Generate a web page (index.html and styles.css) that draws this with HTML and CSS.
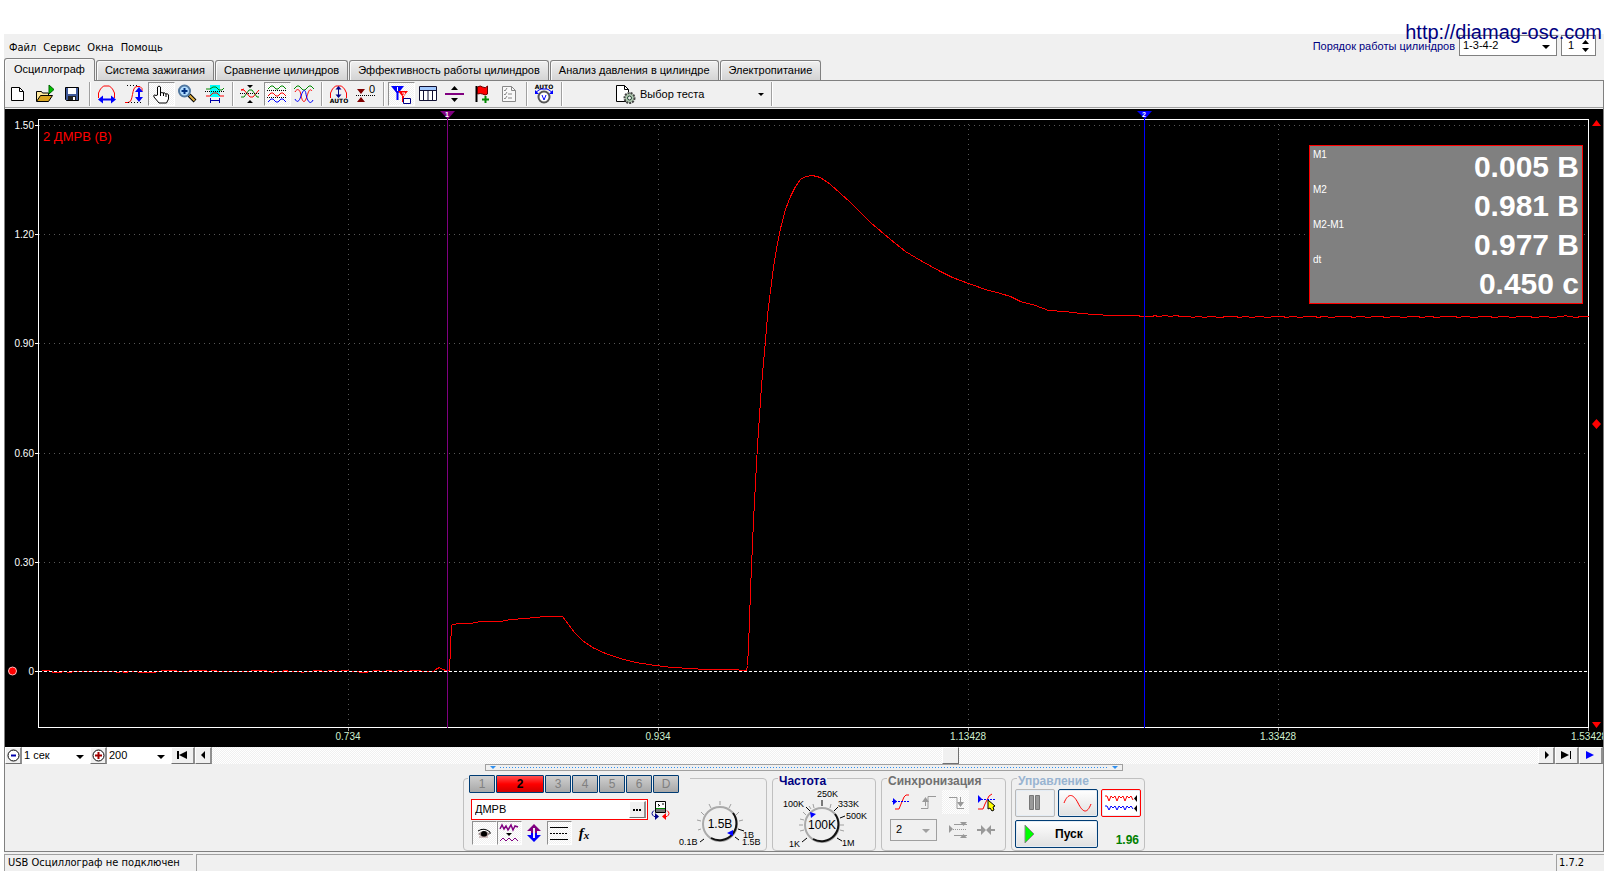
FILE: index.html
```html
<!DOCTYPE html>
<html lang="ru">
<head>
<meta charset="utf-8">
<title>Осциллограф</title>
<link rel="stylesheet" href="styles.css">
</head>
<body>
<a class="site-link" href="#">http://diamag-osc.com</a>
<div class="app">
  <header class="header">
    <nav class="menu">
      <button>Файл</button><button>Сервис</button><button>Окна</button><button>Помощь</button>
    </nav>
    <div class="order">
      <label for="order">Порядок работы цилиндров</label>
      <span class="drop drop-order"><select id="order"><option>1-3-4-2</option></select></span>
      <span class="spin"><input id="cyl" type="text" value="1" aria-label="Цилиндр"><svg width="9" height="14" viewBox="0 0 9 14"><path d="M1 5h7L4.500 1zM1 9h7l-3.500 4z"/></svg></span>
    </div>
  </header>

  <div class="tabs" role="tablist">
    <button class="tab tab-on" role="tab">Осциллограф</button>
    <button class="tab" role="tab">Система зажигания</button>
    <button class="tab" role="tab">Сравнение цилиндров</button>
    <button class="tab" role="tab">Эффективность работы цилиндров</button>
    <button class="tab" role="tab">Анализ давления в цилиндре</button>
    <button class="tab" role="tab">Электропитание</button>
  </div>

  <main class="page">
    <div class="toolbar" role="toolbar">
      <button class="tool" aria-label="Новый"><svg viewBox="0 0 20 20"><path d="M3.500 3.500h8l4 4v9h-12z" fill="#fff" stroke="#000"/><path d="M11.500 3.500v4h4" fill="none" stroke="#000"/></svg></button>
      <button class="tool" aria-label="Открыть"><svg viewBox="0 0 20 20"><path d="M1.500 17V7.500h5l1 1.500h6v3" fill="#ffe9a0" stroke="#000"/><path d="M1.500 17.500l4-6h12l-4 6z" fill="#d9a520" stroke="#000"/><path d="M14 1v9l5-4.500z" fill="#00c000" stroke="#006000"/></svg></button>
      <button class="tool" aria-label="Сохранить"><svg viewBox="0 0 20 20"><path d="M3.500 3.500h13v13h-12l-1-1z" fill="#405a9a" stroke="#000"/><path d="M6 4h8v6H6z" fill="#fff"/><path d="M6 12h8v4H6z" fill="#222"/><path d="M11 13h2v3h-2z" fill="#fff"/></svg></button>
      <i class="sep"></i>
      <button class="tool" aria-label="Растянуть по горизонтали"><svg viewBox="0 0 20 20"><path d="M1.500 14V9l2-4 3-3h6l3 3 2 4v5" fill="none" stroke="#f00"/><path d="M3 15.500h14" stroke="#00f" stroke-width="2"/><path d="M1 15.500l5-4v8zM19 15.500l-5-4v8z" fill="#00f"/></svg></button>
      <button class="tool" aria-label="Растянуть по вертикали"><svg viewBox="0 0 20 20"><path d="M1 18.500h3c6 0 3-16 9-16h3l2 2v3" fill="none" stroke="#f00"/><path d="M3 1.500h12M4 18.500h15" stroke="#000" stroke-dasharray="1 2"/><path d="M15 6v10" stroke="#00f" stroke-width="2"/><path d="M15 3l4 5h-8zM15 18l4-5h-8z" fill="#00f"/></svg></button>
      <button class="tool pressed" aria-label="Рука"><svg viewBox="0 0 20 20"><path d="M6.500 11V3q1.500-2 3 0v6q1.500-1 2.500 0 2-1 2.500 1 2.500-1 3 1v4l-2 4H8l-5-6q-1-3 2-1.500z" fill="#fff" stroke="#000"/><path d="M9.500 9v3M12.500 9v3M15 10v3" stroke="#000"/></svg></button>
      <button class="tool" aria-label="Лупа"><svg viewBox="0 0 20 20"><path d="M11 11l6 6" stroke="#000" stroke-width="4"/><path d="M11.500 11.500l5 5" stroke="#e0b040" stroke-width="2"/><circle cx="6.500" cy="7" r="5.500" fill="#b0dcff" stroke="#5078a0" stroke-width="2"/><path d="M6.500 4v6M3.500 7h6" stroke="#003080" stroke-width="2"/></svg></button>
      <button class="tool" aria-label="Область"><svg viewBox="0 0 20 20"><path d="M5 1h10v12H5z" fill="#0ff"/><path d="M1 5h4l3-2h3l3 3h3l2-2" fill="none" stroke="#080"/><path d="M1 12h4l3-3h4l3 3h4" fill="none" stroke="#f00"/><path d="M0 7.500h19" stroke="#000" stroke-dasharray="1 1"/><path d="M5.500 14v5M14.500 14v5M6 16.500h8" stroke="#00a" fill="none"/></svg></button>
      <i class="sep"></i>
      <button class="tool" aria-label="Совместить"><svg viewBox="0 0 20 20"><path d="M1 6h3l6 7h3l6-7M1 6l3-1" fill="none" stroke="#f00"/><path d="M1 13h3l5-7h3l5 7h2" fill="none" stroke="#080"/><path d="M0 9.500h20" stroke="#000" stroke-dasharray="1 1"/><path d="M7 1h6l-3 3zM7 19h6l-3-3z"/></svg></button>
      <button class="tool pressed" aria-label="Разделить"><svg viewBox="0 0 20 20"><path d="M1 5l3-3h2l3 3h2l3-3h2l3 3" fill="none" stroke="#080"/><path d="M1 12l3-3h2l3 3h2l3-3h2l3 3" fill="none" stroke="#f00"/><path d="M1 18l3-3h2l3 3h2l3-3h2l3 3" fill="none" stroke="#00f"/><path d="M0 6.500h20M0 13.500h20" stroke="#000" stroke-dasharray="1 1"/></svg></button>
      <button class="tool" aria-label="Наложить"><svg viewBox="0 0 20 20"><path d="M0 5l3-3h2l4 4h2l4-4h2l3 3" fill="none" stroke="#080"/><path d="M1 8c2-4 5-3 6 3s3 9 5 4 3-12 6-8" fill="none" stroke="#f00"/><path d="M1 15c2 4 4 3 6-3s4-8 5-2 4 12 7 6" fill="none" stroke="#00f"/></svg></button>
      <i class="sep"></i>
      <button class="tool" aria-label="Авто"><svg viewBox="0 0 20 20"><path d="M1.500 14V9l2-4 3-3h6l3 3 2 4v5" fill="none" stroke="#f00"/><path d="M9.500 4v9" stroke="#008" /><path d="M9.500 2l3 3.500h-6zM9.500 14l3-3.500h-6z" fill="#008"/><text class="icon-text" x="10" y="19">AUTO</text></svg></button>
      <button class="tool" aria-label="Ноль"><svg viewBox="0 0 20 20"><path d="M1 5h8l-4 5zM1 18h8l-4-5z" fill="#800000"/><path d="M0 11.500h20" stroke="#000" stroke-dasharray="1 1"/><text x="13" y="9" font-size="11">0</text></svg></button>
      <i class="sep"></i>
      <button class="tool pressed" aria-label="Маркеры"><svg viewBox="0 0 20 20"><path d="M0 2h13L7.500 9v7h-2V9z" fill="#00f"/><path d="M7 7h10l-4 5v6h-2v-6z" fill="#f00"/><path d="M6.500 3v4M11 9h3l-2 3" stroke="#fff" fill="none"/><path d="M12.500 14.500h7v5h-7z" fill="#fff" stroke="#008"/></svg></button>
      <button class="tool" aria-label="Таблица"><svg viewBox="0 0 20 20"><path d="M1.500 2.500h17v14h-17z" fill="#fff" stroke="#113"/><path d="M2 3h16v3H2z" fill="#a0c8ff"/><path d="M2 6.500h16M5.500 6v10M10 6v10M14.500 6v10" stroke="#113"/></svg></button>
      <button class="tool" aria-label="Линия"><svg viewBox="0 0 20 20"><path d="M0 9h19v2H0z" fill="#800080"/><path d="M6 6h7L9.500 2zM6 14h7l-3.500 4z"/></svg></button>
      <button class="tool" aria-label="Флаг"><svg viewBox="0 0 20 20"><path d="M4.500 2v16" stroke="#000" stroke-width="2"/><path d="M5.500 3q3-2 5 0 3 2 5-1v8q-2 2-5 0-2-1-5 0z" fill="#f00" stroke="#600"/><path d="M13.500 12v7M10 15.500h7" stroke="#080" stroke-width="2"/></svg></button>
      <button class="tool" aria-label="Список"><svg viewBox="0 0 20 20"><path d="M3.500 2.500h9l4 4v11h-13z" fill="#f8f8f8" stroke="#888"/><path d="M12.500 2.500v4h4M5 6l1 1 2-3M5 10l1 1 2-3M5 14l1 1 2-3M9 10h4M9 14h4" fill="none" stroke="#888"/></svg></button>
      <i class="sep"></i>
      <button class="tool" aria-label="Автонастройка"><svg viewBox="0 0 20 20"><text class="icon-text" x="10" y="5">AUTO</text><circle cx="10" cy="13" r="5.500" fill="#fff" stroke="#555" stroke-width="2"/><path d="M8 11l2 5 2-5M1 9l4-3 2-1h6l2 1 4 3" fill="none" stroke="#00f"/><path d="M1 6v4h4zM19 6v4h-4z" fill="#00f"/></svg></button>
      <i class="sep"></i>
      <button class="test"><svg width="20" height="20" viewBox="0 0 20 20"><path d="M10 17.500H.5v-16h8l4 4V8" fill="#fff" stroke="#000"/><path d="M8.500 1.500v4h4" fill="none" stroke="#000"/><circle cx="13.500" cy="14" r="5" fill="#b0c8b0" stroke="#444" stroke-width="2" stroke-dasharray="2 1"/><circle cx="13.500" cy="14" r="2" fill="#eee" stroke="#243"/></svg><span>Выбор теста</span></button>
      <i class="sep"></i>
    </div>

    <section class="scope">
      <svg class="plot" viewBox="5 109 1598 638">
        <path class="grid" d="M39 125.500H1588M39 234.500H1588M39 343.500H1588M39 453.500H1588M39 562.500H1588M348.500 124V727M658.500 124V727M968.500 124V727M1278.500 124V727"/>
        <path class="frame" d="M38.500 119.500H1588.500V727.500H38.500zM35 125.500h3M35 234.500h3M35 343.500h3M35 453.500h3M35 562.500h3M35 671.500h3"/>
        <path class="tick" d="M348.500 728v3M658.500 728v3M968.500 728v3M1278.500 728v3M1588.500 728v3"/>
        <polyline class="trace" transform="translate(.5 .5)" points="39,671 44,670 49,670 50,671 54,672 60,672 62,671 70,672 72,671 115,671 116,672 119,672 120,671 126,672 128,671 147,672 155,672 156,671 166,670 175,670 178,671 200,670 206,670 207,671 215,670 217,671 250,671 252,670 265,670 272,672 274,671 282,671 284,670 290,671 300,671 302,672 305,671 320,670 323,671 333,670 335,671 347,670 350,671 366,672 368,671 378,670 381,671 390,670 393,671 402,670 405,671 415,670 419,670 421,671 433,671 435,669 439,667 442,669 446,670 449,670 450,647 451,625 452,624 460,623 470,623 480,621 500,621 510,619 525,618 535,617 545,616 562,616 568,624 574,632 582,640 592,647 605,653 620,658 635,662 655,665 672,667 690,668 705,669 730,669 746,670 747,665 748,646 749,620 750,590 753,520 757,445 761,385 765,340 767,315 770,290 773,267 776,248 780,228 785,209 790,196 795,186 800,179 805,176 812,175 820,177 830,184 850,202 870,222 890,239 905,251 920,260 940,271 952,277 968,283 985,289 1000,293 1010,296 1020,301 1035,305 1048,310 1065,311 1080,313 1110,315 1138,315 1140,316 1152,316 1154,315 1158,316 1166,315 1169,316 1176,315 1180,316 1190,316 1191,317 1198,316 1204,317 1210,316 1220,317 1226,316 1236,316 1238,317 1245,316 1252,317 1258,316 1268,317 1273,316 1283,316 1285,317 1292,316 1300,317 1306,316 1315,316 1317,317 1323,316 1331,317 1338,316 1350,316 1352,317 1360,316 1368,317 1374,316 1382,316 1384,317 1395,316 1403,317 1410,316 1418,316 1420,317 1430,316 1436,317 1444,316 1455,316 1457,317 1465,316 1474,317 1482,316 1490,316 1492,317 1504,316 1512,317 1520,316 1530,316 1532,317 1545,316 1552,317 1562,316 1565,315 1568,316 1576,317 1580,316 1588,316"/>
        <path class="zero" d="M39 671.500H1588"/>
        <path fill="#800080" d="M447 117h1v611h-1zM440 111h15l-7 8z"/>
        <path fill="#00f" d="M1144 117h1v611h-1zM1137 111h15l-7 8z"/>
        <text class="cursor-num" x="447" y="117">1</text>
        <text class="cursor-num" x="1144" y="117">2</text>
        <path fill="#f00" d="M1592 126h9l-4.500-6zM1592 722h9l-4.500 6zM1592 424l4.500-5 4.500 5-4.500 5z"/>
        <circle cx="12.500" cy="671" r="4" fill="#f00" stroke="#fbb"/>
        <g class="y-axis"><text x="34" y="129">1.50</text><text x="34" y="238">1.20</text><text x="34" y="347">0.90</text><text x="34" y="457">0.60</text><text x="34" y="566">0.30</text><text x="34" y="675">0</text></g>
        <g class="x-axis"><text x="348" y="740">0.734</text><text x="658" y="740">0.934</text><text x="968" y="740">1.13428</text><text x="1278" y="740">1.33428</text><text x="1589" y="740">1.53428</text></g>
        <text class="plot-title" x="43" y="141">2 ДМРВ (В)</text>
      </svg>
      <div class="readout">
        <div class="readout-names"><span>M1</span><span>M2</span><span>M2-M1</span><span>dt</span></div>
        <div class="readout-values"><span>0.005 В</span><span>0.981 В</span><span>0.977 В</span><span>0.450 с</span></div>
      </div>
    </section>

    <div class="timeline">
      <button class="raised" aria-label="Уменьшить"><svg width="13" height="13" viewBox="0 0 13 13"><circle cx="6.500" cy="6.500" r="5.500" fill="#fff" stroke="#000"/><path d="M4 6.500h5" stroke="#00a" stroke-width="2"/></svg></button>
      <span class="drop drop-time"><select aria-label="Время"><option>1 сек</option></select></span>
      <button class="raised" aria-label="Увеличить"><svg width="13" height="13" viewBox="0 0 13 13"><circle cx="6.500" cy="6.500" r="5.500" fill="#fff" stroke="#000"/><path d="M3 6.500h7M6.500 3v7" stroke="#a00000" stroke-width="2"/></svg></button>
      <span class="drop drop-zoom"><select aria-label="Масштаб"><option>200</option></select></span>
      <button class="raised wide" aria-label="В начало"><svg width="11" height="8" viewBox="0 0 11 8"><path d="M0 0h2v8H0zM2 4l8-4v8z"/></svg></button>
      <button class="raised" aria-label="Назад"><svg width="5" height="8" viewBox="0 0 5 8"><path d="M0 4l4-4v8z"/></svg></button>
      <input class="scroll" type="range" min="0" max="1000" value="558" aria-label="Прокрутка">
      <button class="raised" aria-label="Вперёд"><svg width="5" height="8" viewBox="0 0 5 8"><path d="M5 4L1 0v8z"/></svg></button>
      <button class="raised wide" aria-label="В конец"><svg width="11" height="8" viewBox="0 0 11 8"><path d="M9 0h1v8H9zM8 4L0 0v8z"/></svg></button>
      <button class="raised wide" aria-label="Воспроизвести"><svg width="9" height="8" viewBox="0 0 9 8"><path fill="#00f" d="M8 4L0 0v8z"/></svg></button>
    </div>

    <div class="splitter"><i></i><b></b><i></i></div>

    <div class="panels">
      <section class="panel panel-channel">
        <div class="channels">
          <button class="ch">1</button><button class="ch ch-on">2</button><button class="ch">3</button><button class="ch">4</button><button class="ch">5</button><button class="ch">6</button><button class="ch">D</button>
        </div>
        <div class="channel-body">
          <div class="channel-left">
            <div class="sensor-row">
              <span class="sensor"><input type="text" value="ДМРВ" aria-label="Датчик"><button class="raised" aria-label="Выбрать датчик"><svg width="9" height="2" viewBox="0 0 9 2"><path d="M0 0h2v2H0zM3 0h2v2H3zM6 0h2v2H6z"/></svg></button></span>
              <button class="plain" aria-label="Инвертировать"><svg width="20" height="20" viewBox="0 0 20 20"><path d="M4.500 1.500h10v11h-10z" fill="#fff" stroke="#000"/><path d="M5 9h9v3H5z" fill="#777"/><path d="M5 8.500h9" stroke="#080"/><path d="M7 4l2 2M11 4h2M7 6h1" stroke="#000"/><path d="M3 10.500q-4 3 0 6h2" fill="none" stroke="#008"/><path d="M4 13v7l4-3.500z" fill="#008"/><path d="M16 10.500q4 3 0 6h-2" fill="none" stroke="#f00"/><path d="M15 13v7l-4-3.500z" fill="#f00"/></svg></button>
            </div>
            <div class="channel-tools">
              <button class="tool pressed" aria-label="Видимость"><svg viewBox="0 0 20 20"><path d="M4 8q6-4 12 1v2" fill="none" stroke="#000"/><path d="M4 11q6-6 12 0-6 5-12 0z" fill="#988"/><circle cx="10" cy="11" r="3"/><path d="M5 14h9" stroke="#a88"/></svg></button>
              <button class="tool pressed" aria-label="Фильтр"><svg viewBox="0 0 20 20"><path d="M1 6l2-4 2 4 2-3 2 4 3-5 2 5 2-4 3 1" fill="none" stroke="#800080" stroke-width="1.500"/><path d="M1 18l3-3 3 3 3-3 3 3 3-3 3 3" fill="none" stroke="#800080"/><path d="M7 10h6l-3 3z"/></svg></button>
              <button class="tool" aria-label="Смещение"><svg viewBox="0 0 20 20"><path d="M10 1l7 7h-4v3H7V8H3z" fill="#800080"/><path d="M10 19l7-7h-4v-2H7v2H3z" fill="#00f"/><path d="M10 5v10" stroke="#f0f0f0" stroke-width="2"/></svg></button>
              <button class="tool pressed" aria-label="Линии"><svg viewBox="0 0 20 20"><path d="M1 4.500h18M1 16.500h18" stroke="#000"/><path d="M1 10.500h18" stroke="#000" stroke-dasharray="2 1"/></svg></button>
              <button class="tool fx">f<small>x</small></button>
            </div>
          </div>
          <svg class="knob" width="93" height="56" viewBox="671 793 93 56">
            <path class="knob-ticks" d="M718 801v4M707 804l2 4M729 804l-2 4M699 812l3 3M737 812l-3 3M695 820l4 1M741 820l-4 1M696 830l3-1"/>
            <path class="knob-marks" d="M698 842l4-3M736 829l6 2M733 837l4 3"/>
            <circle cx="718" cy="824" r="17" fill="#f0f0f0" stroke="#aaa" stroke-width="2"/>
            <path d="M731 813a17 17 0 0 1-22 25" fill="none" stroke="#111" stroke-width="2"/>
            <path d="M725 833l6-3v6z" fill="#00f"/>
            <text class="knob-value" x="718" y="828">1.5В</text>
            <text x="677" y="845">0.1В</text><text x="741" y="838">1В</text><text x="740" y="845">1.5В</text>
          </svg>
        </div>
      </section>

      <section class="panel panel-rate">
        <h2 class="title navy">Частота</h2>
        <svg class="knob" width="102" height="62" viewBox="773 786 102 62">
          <path class="knob-ticks" d="M813 803l1 4M831 803l-1 4M800 818l4 1M799 824h4M800 830l4-1M844 824h-4M844 830l-4-1M803 811l3 3M809 805l2 3"/>
          <path class="knob-marks" d="M806 806l4 4M822 799v6M838 806l-4 4M845 815l-5 2M802 841l5-4M837 837l5 3"/>
          <circle cx="822" cy="824" r="17" fill="#f0f0f0" stroke="#aaa" stroke-width="2"/>
          <path d="M835 813a17 17 0 0 1-22 25" fill="none" stroke="#111" stroke-width="2"/>
          <path d="M810 811l6 2-5 4z" fill="#00f"/>
          <text class="knob-value" x="822" y="828">100K</text>
          <text x="783" y="806">100K</text><text x="817" y="796">250K</text><text x="838" y="806">333K</text><text x="846" y="818">500K</text><text x="789" y="846">1K</text><text x="842" y="845">1M</text>
        </svg>
      </section>

      <section class="panel panel-sync">
        <h2 class="title gray">Синхронизация</h2>
        <div class="sync-row">
          <button class="tool" aria-label="Синхронизация"><svg viewBox="0 0 20 20"><path d="M4 17h4l2-5 3-7 2-2h3" fill="none" stroke="#f00"/><path d="M1 9.500h17" stroke="#00f" stroke-dasharray="2 1"/><path d="M2 6v7l4-3.500z" fill="#00f"/></svg></button>
          <button class="tool" aria-label="По фронту"><svg viewBox="0 0 20 20"><path d="M3 16.500h7v-12h8M7.500 14V8" fill="none" stroke="#999"/><path d="M4 10h7L7.500 5z" fill="#999"/></svg></button>
          <button class="tool pressed flat" aria-label="По спаду"><svg viewBox="0 0 20 20"><path d="M4 5.500h8v11h7M15.500 5v6" fill="none" stroke="#999"/><path d="M12 10h7l-3.500 5z" fill="#999"/></svg></button>
          <button class="tool last" aria-label="Захват"><svg viewBox="0 0 20 20"><path d="M1 17h5l2-5 4-8 3-2" fill="none" stroke="#f00"/><path d="M1 7.500h18" stroke="#00f" stroke-dasharray="2 1"/><path d="M1 3v8l4-4z" fill="#00f"/><path d="M11 8v9l2-1 2 3 2-1-1-3 2-1z" fill="#ff0" stroke="#000"/></svg></button>
        </div>
        <div class="sync-row sync-lower">
          <span class="drop drop-sync"><select aria-label="Канал синхронизации" disabled><option>2</option></select></span>
          <button class="tool" aria-label="Уровень"><svg viewBox="0 0 20 20"><path d="M6 4.500h13M6 15.500h13" stroke="#999"/><path d="M5 9.500h14" stroke="#999" stroke-dasharray="1 1"/><path d="M1 5v8l4-4zM12 2h7l-3.500 4zM12 18h7l-3.500-4z" fill="#999"/></svg></button>
          <button class="tool" aria-label="Сжать"><svg viewBox="0 0 20 20"><path d="M1 10h5M14 10h5" stroke="#999" stroke-width="2"/><path d="M5 5v10l5-5zM15 5v10l-5-5z" fill="#999"/></svg></button>
        </div>
      </section>

      <section class="panel panel-run">
        <h2 class="title pale">Управление</h2>
        <div class="run-grid">
          <button class="run off" aria-label="Пауза"><svg width="12" height="16" viewBox="0 0 12 16"><path d="M.5.5h4v14h-4zM6.500.5h4v14h-4z" fill="#999" stroke="#777"/></svg></button>
          <button class="run" aria-label="Один канал"><svg width="32" height="22" viewBox="0 0 32 22"><path d="M2 11C6 1 11 1 16 11s9 11 13 1" fill="none" stroke="#f00"/></svg></button>
          <button class="run red" aria-label="Все каналы"><svg width="36" height="22" viewBox="0 0 36 22"><path d="M2 4h2l2 5 2-5 2 2 2-2 2 5 2-5 2 2 2-2 2 5 2-5 2 2 2-2 2 4" fill="none" stroke="#f00"/><path d="M2 14h2l2 4 2-4 2 2 2-2 2 4 2-4 2 2 2-2 2 4 2-4 2 2 2-2 2 3" fill="none" stroke="#00f"/><path d="M34 3v7l-3-3.500zM34 13v7l-3-3.500z"/></svg></button>
          <button class="run start"><svg width="12" height="20" viewBox="0 0 12 20"><path d="M1 1l9 9-9 9z" fill="#0f0" stroke="#888"/></svg><span>Пуск</span></button>
          <output class="ratio">1.96</output>
        </div>
      </section>
    </div>
  </main>

  <footer class="status">
    <span class="status-usb">USB Осциллограф не подключен</span>
    <span class="status-info"></span>
    <span class="status-version">1.7.2</span>
  </footer>
</div>
</body>
</html>
```
FILE: styles.css
```css
* { box-sizing: border-box; }

body {
  margin: 0;
  padding: 34px 12px 4px 4px;
  background: #fff;
  color: #000;
  font: 11px/14px "Liberation Sans", sans-serif;
}

button, input, select { font: inherit; color: inherit; margin: 0; padding: 0; border: 0; background: none; }
svg { display: block; flex: none; }

.app { background: #f0f0f0; }

.site-link {
  position: absolute;
  top: 20px;
  right: 14px;
  z-index: 2;
  color: #000080;
  font-size: 20px;
  line-height: 24px;
  text-decoration: none;
}

.header { display: flex; justify-content: space-between; height: 24px; }
.menu { display: flex; gap: 7px; padding: 7px 0 0 5px; align-items: flex-start; font-family: "DejaVu Sans Condensed", "DejaVu Sans", sans-serif; }
.order { display: flex; gap: 4px; align-items: flex-start; padding: 1px 8px 0 0; color: #000080; }
.order label { padding-top: 4px; }

.drop { position: relative; display: block; background: #fff; color: #000; }
.drop select { appearance: none; display: block; width: 100%; height: 100%; padding: 0 0 2px 3px; border-radius: 0; opacity: 1; }
.drop::after {
  content: "";
  position: absolute;
  top: 50%;
  right: 6px;
  margin-top: -1px;
  border: 4px solid transparent;
  border-top-color: #000;
  border-bottom: 0;
  pointer-events: none;
}
.drop-order { width: 98px; height: 21px; border: 1px solid #808080; }
.drop-time { width: 68px; }
.drop-time select, .drop-zoom select { padding-left: 2px; }
.drop-zoom { width: 64px; }
.drop-sync { width: 47px; height: 22px; border: 1px solid #a0a0a0; background: #f0f0f0; }
.drop-sync select { padding-left: 5px; }
.drop-sync::after { border-top-color: #a0a0a0; }

.spin { display: flex; align-items: center; width: 35px; height: 21px; border: 1px solid #808080; background: #fff; color: #000; }
.spin input { width: 19px; height: 17px; padding: 0 0 2px 6px; }

.tabs { display: flex; align-items: flex-end; gap: 1px; height: 23px; border-bottom: 1px solid #808080; }
.tab {
  height: 20px;
  padding: 0 8px 2px;
  border: 1px solid #808080;
  border-bottom: 0;
  border-radius: 3px 3px 0 0;
  background: linear-gradient(#f0f0f0, #d4d4d4);
  box-shadow: inset 1px 1px #fafafa;
}
.tab-on { height: 23px; margin: 0 0 -1px; padding: 0 9px 2px; background: #f0f0f0; }

.page { border: 1px solid #808080; border-top: 0; }

.toolbar { display: flex; align-items: center; height: 27px; padding-bottom: 1px; border-bottom: 1px solid #a0a0a0; margin-bottom: 1px; }
.tool { display: flex; align-items: center; justify-content: center; width: 27px; height: 24px; padding-right: 1px; }
.tool svg { width: 20px; height: 20px; }
.pressed {
  border: 1px solid #fff;
  border-top-color: #909090;
  border-left-color: #909090;
  background: repeating-conic-gradient(#fff 0 25%, #f0f0f0 0 50%) 0 0 / 2px 2px;
}
.flat { border-color: transparent; }
.sep { width: 8px; height: 24px; background: linear-gradient(90deg, transparent 3px, #a0a0a0 3px 4px, #fff 4px 5px, transparent 5px); }
.icon-text { font: bold 6px "DejaVu Sans", sans-serif; text-anchor: middle; }
.test { position: relative; display: flex; align-items: center; gap: 4px; width: 202px; height: 24px; padding-left: 50px; }
.test::after { content: ""; position: absolute; right: 4px; top: 11px; border: 3px solid transparent; border-top-color: #000; border-bottom: 0; }

.scope { position: relative; background: #000; }
.plot { width: 100%; height: auto; font-size: 10px; }
.grid { fill: none; stroke: #585858; stroke-dasharray: 1 4; shape-rendering: crispEdges; }
.frame { fill: none; stroke: #fff; shape-rendering: crispEdges; }
.tick { stroke: #a0a0a0; shape-rendering: crispEdges; }
.trace { fill: none; stroke: #f00; shape-rendering: crispEdges; }
.zero { stroke: #fff; stroke-dasharray: 3 2; shape-rendering: crispEdges; }
.cursor-num { fill: #fff; font-size: 7px; font-weight: bold; text-anchor: middle; }
.y-axis { fill: #fff; text-anchor: end; }
.x-axis { fill: #d0f0d0; text-anchor: middle; }
.plot-title { fill: #f00; font-size: 13px; }

.readout {
  position: absolute;
  top: 36px;
  right: 20px;
  display: flex;
  justify-content: space-between;
  width: 274px;
  height: 159px;
  padding: 1px 3px 0;
  border: 1px solid #f00;
  background: #808080;
  color: #fff;
}
.readout-names { display: grid; grid-auto-rows: 35px; padding-top: 2px; font-size: 10px; line-height: 12px; }
.readout-values { display: grid; grid-auto-rows: 39px; font-size: 30px; font-weight: bold; line-height: 39px; text-align: right; }

.timeline { display: flex; height: 17px; }
.raised {
  display: flex;
  align-items: center;
  justify-content: center;
  flex: none;
  width: 17px;
  height: 17px;
  border: 1px solid #fff;
  border-right: 2px solid #909090;
  border-bottom: 1px solid #707070;
  background: #f0f0f0;
}
.timeline .raised { padding-bottom: 1px; }
.wide { width: 24px; }
.scroll { appearance: none; flex: 1; min-width: 0; height: 17px; background: repeating-conic-gradient(#fff 0 25%, #f0f0f0 0 50%) 0 0 / 2px 2px; }
.scroll::-webkit-slider-thumb { appearance: none; width: 17px; height: 17px; border: 1px solid #fff; border-right-color: #707070; border-bottom-color: #707070; background: #f0f0f0; }

.splitter { display: flex; align-items: center; gap: 4px; width: 638px; max-width: 100%; height: 7px; margin: 0 auto; padding: 0 4px; border: 1px solid #a0a0a0; }
.splitter i { border: 3px solid transparent; border-top-color: #2f8fef; border-bottom: 0; }
.splitter b { flex: 1; height: 1px; background: repeating-linear-gradient(90deg, #2f8fef 0 1px, transparent 1px 3px); }

.panels { display: flex; justify-content: center; gap: 5px; padding-top: 7px; }
.panel { height: 73px; border: 1px solid #c0c0c0; border-radius: 4px; }
.panel-channel { width: 304px; }
.panel-rate { width: 104px; }
.panel-sync { width: 125px; }
.panel-run { width: 134px; }

.channels { display: flex; gap: 1px; width: 222px; margin: -4px 0 0 4px; padding-left: 1px; background: #f0f0f0; }
.ch { width: 26px; height: 18px; border: 1px solid #003c74; border-radius: 1px; background: linear-gradient(#d0d0d0, #a8a8a8); color: #808080; font-size: 12px; }
.ch-on { width: 48px; background: linear-gradient(#ff5050, #f00 50%, #d00000); color: #000; font-weight: bold; }
.channel-body { display: flex; justify-content: space-between; }
.channel-left { padding: 6px 0 0 7px; }
.sensor-row { display: flex; gap: 3px; }
.sensor { display: flex; align-items: center; width: 177px; height: 21px; padding-right: 1px; border: 1px solid #f00; background: #fff; }
.sensor input { flex: 1; min-width: 0; padding: 0 0 2px 3px; }
.channel-tools { display: flex; padding: 1px 0 0 1px; }
.channel-tools .tool { width: 25px; }
.channel-tools .fx { font: italic bold 15px "Liberation Serif", serif; }
.fx small { font-size: 11px; padding-top: 3px; }

.knob { font-size: 9px; }
.knob-value { font-size: 12px; text-anchor: middle; }
.knob-ticks { stroke: #a0a0a0; }
.knob-marks { stroke: #000; }

.title { width: max-content; margin: -4px 0 0 5px; padding: 0 1px; background: #f0f0f0; font-size: 12px; line-height: 12px; }
.navy { color: #000080; }
.gray { color: #707070; }
.pale { color: #99b4d1; }

.sync-row { display: flex; align-items: center; padding: 3px 0 0 6px; }
.sync-row .last { width: 32px; padding-left: 4px; }
.sync-lower { gap: 4px; padding: 4px 0 0 8px; }
.sync-lower .drop { margin-right: 5px; }
.sync-lower .tool { width: 24px; }

.run-grid { display: grid; grid-template-columns: 40px 40px 40px; gap: 3px; padding: 2px 0 0 3px; }
.run { display: flex; align-items: center; justify-content: center; height: 28px; border: 1px solid #003c74; border-radius: 2px; background: linear-gradient(#fff, #e0e0e0); box-shadow: inset 0 0 0 1px #e4ecf4; font-size: 12px; font-weight: bold; }
.off { border-color: #b8b8b8; background: #f0f0f0; }
.red { border-color: #f00; background: #fff; }
.start { grid-column: span 2; justify-content: flex-start; gap: 19px; padding: 0 0 1px 8px; }
.ratio { align-self: end; padding: 0 2px 1px 0; color: #008000; font-size: 12px; font-weight: bold; text-align: right; }

.status { display: flex; gap: 3px; padding-top: 2px; font-family: "DejaVu Sans Condensed", "DejaVu Sans", sans-serif; }
.status span { height: 17px; padding: 1px 3px; border-top: 1px solid #a0a0a0; border-left: 1px solid #a0a0a0; }
.status-usb { width: 189px; }
.status-info { flex: 1; }
.status .status-version { width: 48px; padding-left: 2px; }
```
